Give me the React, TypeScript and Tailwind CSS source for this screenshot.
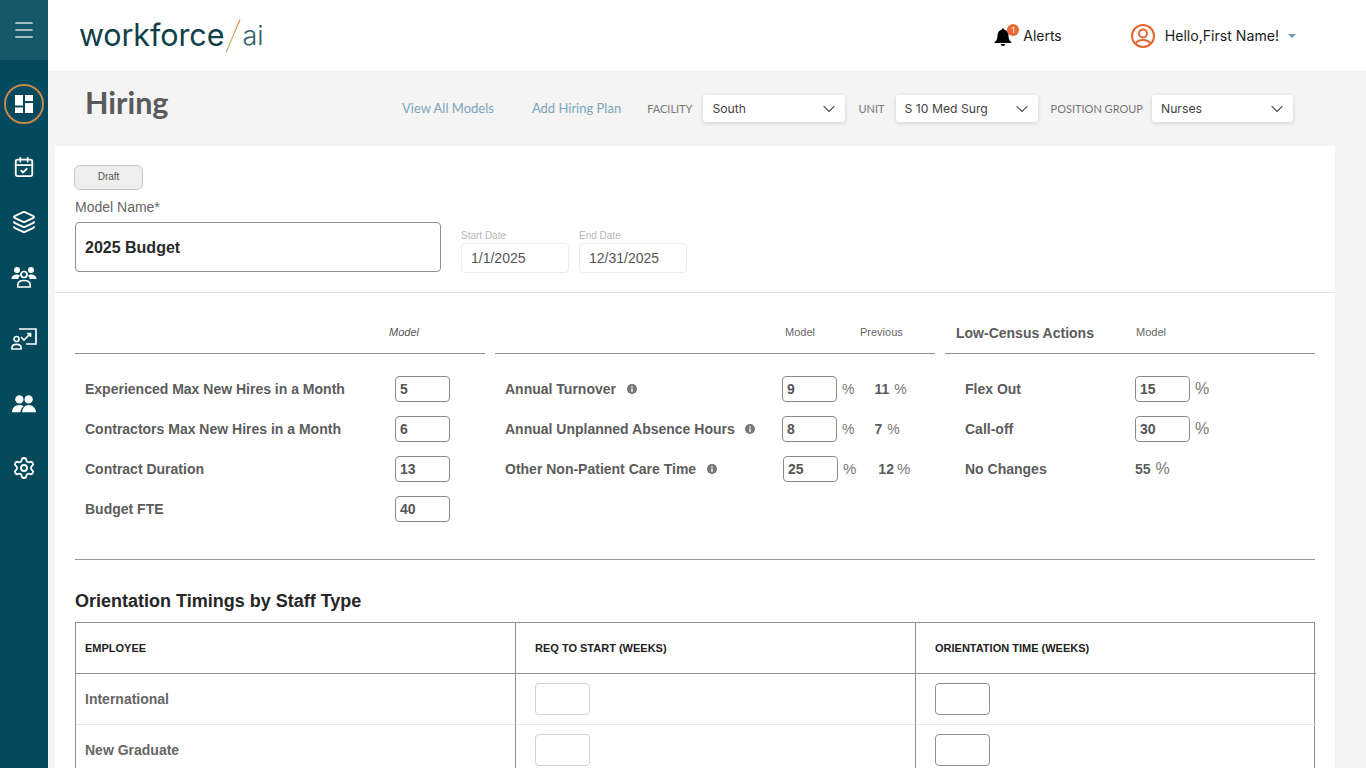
import { CalendarCheck, ChevronDown, Layers, Menu, Settings } from "lucide-react";

const sans = "font-['Liberation_Sans',Arial,sans-serif]";

function TopSelect({ value, className }: { value: string; className: string }) {
  return (
    <div className={`flex h-[27px] items-center justify-between rounded-[3px] bg-white pl-[9px] pr-[6px] shadow-[0_1px_4px_rgba(0,0,0,0.16)] ${className}`}>
      <span className="pt-[1px] font-['Inter',sans-serif] text-[12.200px] text-[#444]">{value}</span>
      <ChevronDown className="h-[20px] w-[20px] text-[#555]" strokeWidth={1.3} />
    </div>
  );
}

function Info() {
  return (
    <svg viewBox="0 0 10 10" className="h-[10px] w-[10px] shrink-0">
      <circle cx="5" cy="5" r="5" fill="#777" />
      <rect x="4.3" y="4.3" width="1.4" height="3.6" fill="#fff" />
      <rect x="4.3" y="2.2" width="1.4" height="1.3" fill="#fff" />
    </svg>
  );
}

function NumBox({ value, className = "" }: { value: string; className?: string }) {
  return (
    <div className={`flex h-[26px] w-[55px] items-center rounded-[4px] border border-[#8a8a8a] bg-white pl-[4px] text-[14px] font-bold text-[#555] ${className}`}>
      {value}
    </div>
  );
}

function Label({ children, className = "" }: { children: React.ReactNode; className?: string }) {
  return <div className={`text-[14px] font-bold text-[#5c5c5c] ${className}`}>{children}</div>;
}

function Pct({ className = "" }: { className?: string }) {
  return <span className={`font-normal text-[#777] ${className}`}>%</span>;
}

const leftRows = [
  ["Experienced Max New Hires in a Month", "5"],
  ["Contractors Max New Hires in a Month", "6"],
  ["Contract Duration", "13"],
  ["Budget FTE", "40"],
];

const midRows = [
  { label: "Annual Turnover", gap: "ml-[11px]", value: "9", prev: "11", prevCls: "ml-[20px]", big: false },
  { label: "Annual Unplanned Absence Hours", gap: "ml-[10px]", value: "8", prev: "7", prevCls: "ml-[20px]", big: false },
  { label: "Other Non-Patient Care Time", gap: "ml-[11px]", value: "25", prev: "12", prevCls: "ml-[22px]", big: true },
];

function Logo() {
  return (
    <div className="relative flex h-[40px] items-center">
      <span className="font-['Inter',sans-serif] text-[30.500px] leading-none tracking-[-0.1px] text-[#0f4049]">workforce</span>
      <svg viewBox="0 0 16 34" className="ml-[1px] h-[34px] w-[16px]">
        <defs>
          <linearGradient id="slash" x1="1" y1="0" x2="0" y2="1">
            <stop offset="0" stopColor="#e58a3c" />
            <stop offset="0.6" stopColor="#dcb65a" />
            <stop offset="1" stopColor="#8db58a" />
          </linearGradient>
        </defs>
        <line x1="15" y1="0.5" x2="1" y2="33.5" stroke="url(#slash)" strokeWidth="1.2" />
      </svg>
      <span className="ml-[1px] font-['Inter',sans-serif] text-[27px] font-light leading-none text-[#35606a]">ai</span>
    </div>
  );
}

function Sidebar() {
  return (
    <aside className="flex w-12 shrink-0 flex-col items-center bg-[#04495c] text-white">
      <div className="flex h-[60px] w-full items-center justify-center bg-[#15596b]">
        <Menu className="h-[24px] w-[24px] text-[#d5e3e6]" strokeWidth={1.7} />
      </div>
      <div className="mt-[24px] flex h-[40px] w-[40px] items-center justify-center rounded-full border-2 border-[#c9864b]">
        <svg viewBox="0 0 18 18" className="h-[18px] w-[18px]" fill="#fff">
          <rect x="0" y="0" width="8" height="10.5" />
          <rect x="10" y="0" width="8" height="6" />
          <rect x="0" y="12.5" width="8" height="5.5" />
          <rect x="10" y="8" width="8" height="10" />
        </svg>
      </div>
      <CalendarCheck className="mt-[32px] h-[22px] w-[22px]" strokeWidth={2} />
      <Layers className="mt-[32px] h-[24px] w-[24px]" strokeWidth={1.8} />
      <svg viewBox="0 0 26 22" className="mt-[32px] h-[22px] w-[26px]" fill="#fff">
        <circle cx="6" cy="4" r="3" />
        <circle cx="20" cy="4" r="3" />
        <path d="M0.5 13c0-3 2.500-4.500 5.500-4.500 1.200 0 2.300.2 3.200.8-1 .9-1.700 2.200-1.900 3.700z" />
        <path d="M25.500 13c0-3-2.500-4.500-5.500-4.500-1.200 0-2.300.2-3.200.8 1 .9 1.700 2.200 1.900 3.700z" />
        <circle cx="13" cy="8.500" r="3" fill="none" stroke="#fff" strokeWidth="1.700" />
        <path d="M6.800 21v-2c0-3 2.800-4.500 6.200-4.500s6.200 1.500 6.200 4.500v2z" fill="none" stroke="#fff" strokeWidth="1.700" />
      </svg>
      <svg viewBox="0 0 26 22" className="mt-[40px] h-[22px] w-[26px]" fill="none" stroke="#fff" strokeWidth="1.700">
        <path d="M8 1h17v15H15" />
        <path d="M10 9l3 3 6-6M16 5.500h3.500V9" />
        <circle cx="5.500" cy="11" r="2.500" />
        <path d="M1 21v-1.500c0-2 2-3.200 4.500-3.200s4.500 1.200 4.500 3.200V21z" />
      </svg>
      <svg viewBox="0 0 26 20" className="mt-[44px] h-[20px] w-[24px]" fill="#fff">
        <circle cx="8" cy="5" r="4.500" />
        <circle cx="18" cy="5" r="4.500" />
        <path d="M0 19c0-5 3.500-8 8-8 1.800 0 3.400.5 4.600 1.400C10.500 14 9.300 16.300 9 19z" />
        <path d="M11 19c.3-5 3-8 7-8s7.700 3 8 8z" />
      </svg>
      <Settings className="mt-[42px] h-[24px] w-[24px]" strokeWidth={1.8} />
    </aside>
  );
}

function Header() {
  return (
    <header className="flex h-[71px] items-center bg-white">
      <div className="ml-[31px]">
        <Logo />
      </div>
      <div className="relative ml-auto mr-[10px] mt-[2px]">
        <svg viewBox="0 0 20 20" className="h-[20px] w-[20px]" fill="#000">
          <path d="M10 1.500c-.8 0-1.300.5-1.300 1.200C6 3.300 4.500 5.500 4.500 8.500c0 4-1.500 5.500-3 6.800V16h17v-.7c-1.500-1.300-3-2.800-3-6.800 0-3-1.500-5.200-4.200-5.800 0-.7-.5-1.200-1.300-1.200z" />
          <path d="M7.800 17h4.400c0 1.200-1 2-2.200 2s-2.200-.8-2.200-2z" />
        </svg>
        <span className="absolute right-[-6px] top-[-3px] flex h-[12px] w-[12px] items-center justify-center rounded-full bg-[#ea6a35] font-['Inter',sans-serif] text-[8px] leading-none text-white">1</span>
      </div>
      <span className="font-['Inter',sans-serif] text-[14px] text-[#1c1c1c]">Alerts</span>
      <svg viewBox="0 0 24 24" className="ml-[69px] h-[24px] w-[24px]" fill="none" stroke="#e4662f" strokeWidth="2">
        <circle cx="12" cy="12" r="11" />
        <circle cx="12" cy="9.500" r="4" />
        <path d="M4.500 19.500c1.500-2.500 4-3.500 7.500-3.500s6 1 7.500 3.500" />
      </svg>
      <span className="ml-[10px] font-['Inter',sans-serif] text-[14.100px] text-[#1c1c1c]">Hello,First Name!</span>
      <div className="ml-[9px] mr-[70px] h-0 w-0 border-x-[4px] border-t-[4px] border-x-transparent border-t-[#6d9bb8]" />
    </header>
  );
}

function Toolbar() {
  return (
    <div className="flex h-[75px] items-start pl-[37px] pt-[24px] font-['Lato',sans-serif]">
      <h1 className="mt-[-13px] w-[83px] text-[30.500px] font-bold leading-[40px] text-[#5a5a5a]">Hiring</h1>
      <a className="ml-[234px] text-[13px] leading-[27px] text-[#7ba4bd]">View All Models</a>
      <a className="ml-[38px] text-[13px] leading-[27px] text-[#7ba4bd]">Add Hiring Plan</a>
      <span className="ml-[26px] text-[11px] leading-[27px] text-[#777]">FACILITY</span>
      <TopSelect value="South" className="ml-[11px] w-[142px]" />
      <span className="ml-[13px] text-[11px] leading-[27px] text-[#777]">UNIT</span>
      <TopSelect value="S 10 Med Surg" className="ml-[11px] w-[142px]" />
      <span className="ml-[13px] text-[11px] leading-[27px] text-[#777]">POSITION GROUP</span>
      <TopSelect value="Nurses" className="ml-[9px] w-[141px]" />
    </div>
  );
}

function ModelHead() {
  return (
    <div className="h-[147px] border-b border-[#e5e5e5] pl-[19px] pt-[19px]">
      <div className="flex h-[25px] w-[69px] items-center justify-center rounded-[6px] border border-[#c8c8c8] bg-[#eeeeee] pb-[2px] text-[10px] text-[#555]">Draft</div>
      <div className="ml-[1px] mt-[9px] text-[14px] leading-[17px] text-[#666]">Model Name*</div>
      <div className="mt-[6px] flex items-start">
        <div className="ml-[1px] flex h-[50px] w-[366px] items-center rounded-[4px] border border-[#8f8f8f] pl-[9px] pt-[2px] text-[16px] font-bold text-[#2a2a2a]">2025 Budget</div>
        <div className="ml-[20px] mt-[7px] w-[108px]">
          <div className="text-[10px] leading-[13px] text-[#b5b5b5]">Start Date</div>
          <div className="mt-[1px] flex h-[30px] items-center rounded-[4px] border border-[#ececec] pl-[9px] text-[14px] text-[#555]">1/1/2025</div>
        </div>
        <div className="ml-[10px] mt-[7px] w-[108px]">
          <div className="text-[10px] leading-[13px] text-[#b5b5b5]">End Date</div>
          <div className="mt-[1px] flex h-[30px] items-center rounded-[4px] border border-[#ececec] pl-[9px] text-[14px] text-[#555]">12/31/2025</div>
        </div>
      </div>
    </div>
  );
}

function Parameters() {
  return (
    <div className="mx-[20px] flex h-[267px] gap-[10px] border-b border-[#9a9a9a]">
      {/* left column */}
      <div className="w-[410px]">
        <div className="flex h-[61px] items-end justify-end border-b border-[#8f8f8f] pb-[14px] pr-[66px] text-[11px] italic leading-[13px] text-[#555]">Model</div>
        <div className="mt-[22px] flex flex-col gap-[14px] pl-[10px] pr-[35px]">
          {leftRows.map(([label, value]) => (
            <div key={label} className="flex items-center justify-between">
              <Label>{label}</Label>
              <NumBox value={value} />
            </div>
          ))}
        </div>
      </div>

      {/* middle column */}
      <div className="w-[440px]">
        <div className="flex h-[61px] items-end border-b border-[#8f8f8f] pb-[14px] pl-[290px] text-[11px] leading-[13px] text-[#666]">
          Model<span className="ml-[45px]">Previous</span>
        </div>
        <div className="mt-[22px] flex flex-col gap-[14px] pl-[10px]">
          {midRows.map((r) => (
            <div key={r.label} className="flex items-center">
              <div className="flex w-[277px] items-center">
                <Label>{r.label}</Label>
                <span className={r.gap}><Info /></span>
              </div>
              <NumBox value={r.value} className={r.big ? "ml-[1px]" : ""} />
              <Pct className={r.big ? "ml-[5px] text-[15px]" : "ml-[5px] text-[14px]"} />
              <span className={`${r.prevCls} text-[14px] font-bold text-[#5c5c5c]`}>{r.prev}</span>
              <Pct className={r.big ? "ml-[3px] text-[15px]" : "ml-[5px] text-[14px]"} />
            </div>
          ))}
        </div>
      </div>

      {/* right column */}
      <div className="w-[370px]">
        <div className="flex h-[61px] items-end border-b border-[#8f8f8f] pb-[11px] pl-[11px]">
          <span className="w-[180px] text-[14px] font-bold leading-[17px] text-[#5c5c5c]">Low-Census Actions</span>
          <span className="mb-[3px] text-[11px] leading-[13px] text-[#666]">Model</span>
        </div>
        <div className="mt-[22px] flex flex-col gap-[14px] pl-[20px]">
          {[["Flex Out", "15"], ["Call-off", "30"]].map(([label, value]) => (
            <div key={label} className="flex items-center">
              <Label className="w-[170px]">{label}</Label>
              <NumBox value={value} />
              <Pct className="ml-[5px] text-[16px]" />
            </div>
          ))}
          <div className="flex h-[26px] items-center">
            <Label className="w-[170px]">No Changes</Label>
            <span className="text-[14px] font-bold text-[#5c5c5c]">55</span>
            <Pct className="ml-[5px] text-[16px]" />
          </div>
        </div>
      </div>
    </div>
  );
}

function Orientation() {
  const rows = ["International", "New Graduate"];
  return (
    <div className="mx-[20px]">
      <h2 className="mt-[31px] text-[18px] font-bold leading-[21px] text-[#262626]">Orientation Timings by Staff Type</h2>
      <div className="mt-[10px] grid grid-cols-[440px_400px_400px] border-x border-t border-[#8f8f8f]">
        <div className="flex h-[51px] items-center border-b border-r border-[#8f8f8f] pl-[9px] text-[11px] font-bold text-[#222]">EMPLOYEE</div>
        <div className="flex h-[51px] items-center border-b border-r border-[#8f8f8f] pl-[19px] text-[11px] font-bold text-[#222]">REQ TO START (WEEKS)</div>
        <div className="flex h-[51px] items-center border-b border-[#8f8f8f] pl-[19px] text-[11px] font-bold text-[#222]">ORIENTATION TIME (WEEKS)</div>
        {rows.map((name) => (
          <div key={name} className="contents">
            <div className="flex h-[51px] items-center border-b border-r border-b-[#e6e6e6] border-r-[#8f8f8f] pl-[9px] text-[14px] font-bold text-[#666]">{name}</div>
            <div className="flex h-[51px] items-center border-b border-r border-b-[#e6e6e6] border-r-[#8f8f8f] pl-[19px]">
              <div className="h-[32px] w-[55px] rounded-[4px] border border-[#d2d2d2]" />
            </div>
            <div className="flex h-[51px] items-center border-b border-b-[#e6e6e6] pl-[19px]">
              <div className="h-[32px] w-[55px] rounded-[4px] border border-[#8f8f8f]" />
            </div>
          </div>
        ))}
      </div>
    </div>
  );
}

export default function App() {
  return (
    <div className={`flex h-[768px] overflow-hidden bg-[#f4f4f4] ${sans}`}>
      <Sidebar />
      <main className="min-w-0 flex-1">
        <Header />
        <Toolbar />
        <div className="ml-[7px] w-[1280px] bg-white pb-[20px]">
          <ModelHead />
          <Parameters />
          <Orientation />
        </div>
      </main>
    </div>
  );
}
